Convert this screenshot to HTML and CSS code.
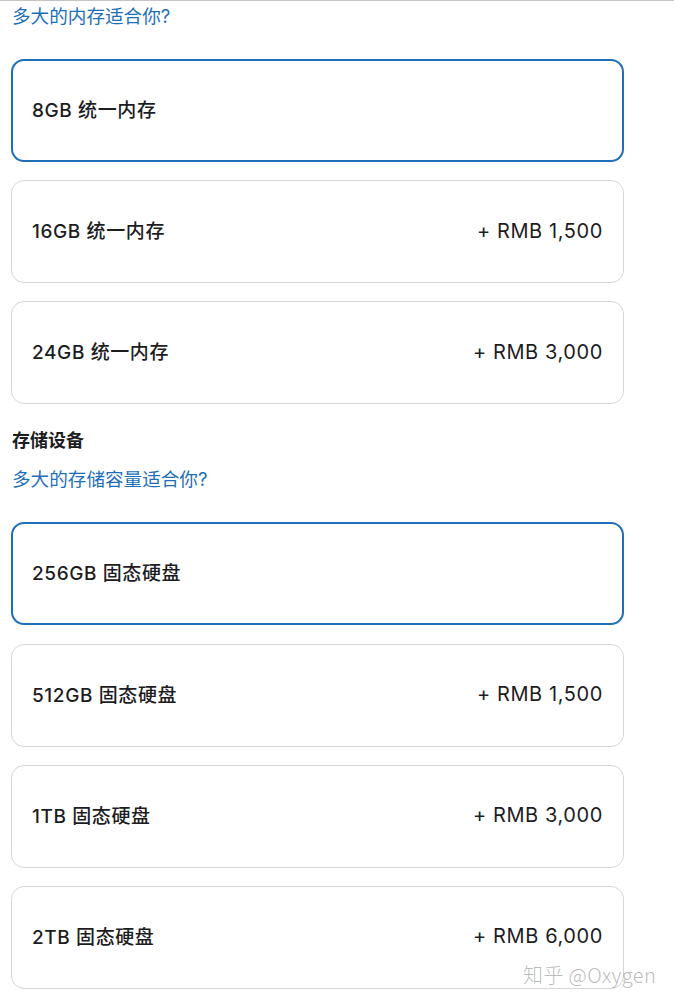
FILE: index.html
```html
<!DOCTYPE html>
<html lang="zh-CN">
<head>
<meta charset="utf-8">
<link rel="stylesheet" href="styles.css">
</head>
<body>
<div class="page">
  <p class="sub first">多大的内存适合你?</p>
  <div class="options">
    <div class="card selected"><span class="label">8GB 统一内存</span></div>
    <div class="card"><span class="label">16GB 统一内存</span><span class="price">+ RMB 1,500</span></div>
    <div class="card"><span class="label">24GB 统一内存</span><span class="price">+ RMB 3,000</span></div>
  </div>
  <h2 class="heading">存储设备</h2>
  <p class="sub second">多大的存储容量适合你?</p>
  <div class="options">
    <div class="card selected"><span class="label">256GB 固态硬盘</span></div>
    <div class="card"><span class="label">512GB 固态硬盘</span><span class="price">+ RMB 1,500</span></div>
    <div class="card"><span class="label">1TB 固态硬盘</span><span class="price">+ RMB 3,000</span></div>
    <div class="card"><span class="label">2TB 固态硬盘</span><span class="price">+ RMB 6,000</span></div>
  </div>
  <div class="watermark">知乎 @Oxygen</div>
</div>
</body>
</html>
```
FILE: styles.css
```css
html, body {
  margin: 0;
  padding: 0;
  background: #ffffff;
}
body {
  font-family: "Inter", "Noto Sans CJK SC", sans-serif;
  color: #1d1d1f;
  border-top: 1px solid #c4c4c4;
}
.page {
  position: relative;
  width: 613px;
  padding-left: 11px;
  height: 1005px;
}
.sub {
  margin: 0;
  padding-left: 1px;
  font-size: 18.6px;
  line-height: 24px;
  color: #1f6fb8;
}
.sub.first {
  margin-top: 3px;
  margin-bottom: 31px;
}
.sub.second {
  margin-top: 14px;
  margin-bottom: 31px;
}
.heading {
  margin: 25px 0 0 1px;
  font-size: 18px;
  line-height: 24px;
  font-weight: 700;
  color: #1d1d1f;
}
.options {
  display: flex;
  flex-direction: column;
  gap: 18.2px;
}
.card {
  box-sizing: border-box;
  height: 103px;
  border: 1px solid #d6d6da;
  border-radius: 13px;
  display: flex;
  align-items: center;
  justify-content: space-between;
  padding: 0 20px 0 20px;
}
.card.selected {
  border: 2px solid #1f6fb8;
  padding: 0 19px 0 19px;
}
.label {
  font-size: 19px;
  line-height: 24px;
  font-weight: 500;
  letter-spacing: 0.6px;
  color: #1d1d1f;
  margin-top: 1px;
}
.price {
  font-size: 20px;
  line-height: 24px;
  font-weight: 400;
  letter-spacing: 0.6px;
  color: #1d1d1f;
  margin-top: -2px;
}
.watermark {
  position: absolute;
  left: 523px;
  top: 957px;
  font-size: 20px;
  line-height: 28px;
  font-weight: 300;
  color: rgba(140, 140, 140, 0.6);
  font-family: "Noto Sans CJK SC", sans-serif;
  letter-spacing: 0.4px;
  white-space: nowrap;
}
```
